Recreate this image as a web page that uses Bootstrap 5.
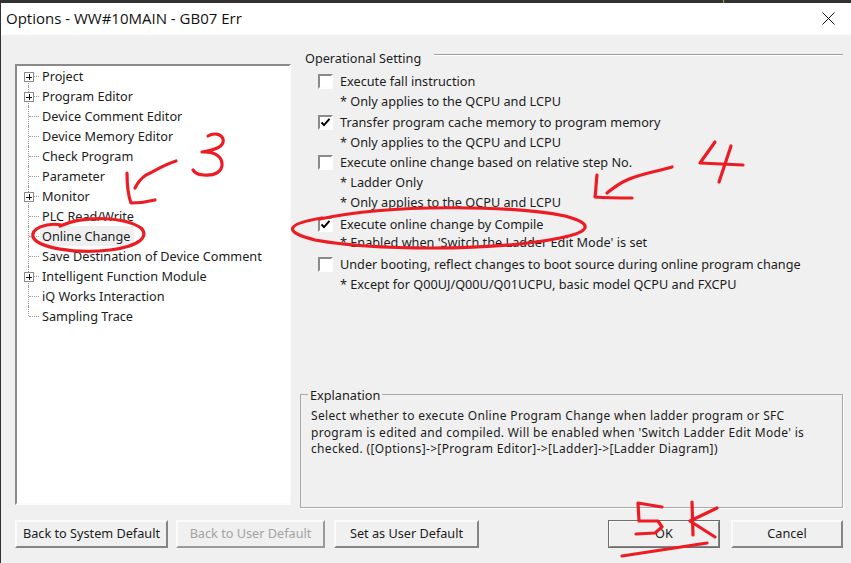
<!DOCTYPE html>
<html lang="en">
<head>
<meta charset="utf-8">
<title>Options</title>
<link rel="stylesheet" href="https://cdn.jsdelivr.net/npm/bootstrap@5.3.0/dist/css/bootstrap.min.css">
<style>
html,body{height:563px;overflow:hidden}
body{background:#f0f0f0;font-family:"Noto Sans","Liberation Sans",sans-serif;font-size:12.7px;line-height:20px;color:#1c1c1c}
.dlg{position:relative;width:851px;height:563px;border-left:1px solid #333}
.topstrip{height:3px;background:#333;margin-left:-1px}
.topnote{position:absolute;left:722px;top:0;height:3px;width:129px;overflow:hidden;border-left:1px solid #b5a52a}
.titlebar{height:32px;background:#fff;padding:0 5px 2px;font-family:"Open Sans","Noto Sans",sans-serif;font-size:15px;color:#111}
.closex{margin-right:11px}
.content{padding:16px 8px 0 14px;gap:9px;height:473px}
.treebox{width:276px;height:441px;margin-top:13px;background:#fff;border:2px solid;border-color:#8a8a8a #fbfbfb #fbfbfb #8a8a8a;padding:0}
.treerow{position:relative;height:20px;padding-left:24px;white-space:nowrap}
.treerow::before{content:"";position:absolute;left:11px;top:0;bottom:0;border-left:1px dotted #999}
.treerow:first-child::before{top:9px}
.treerow:last-child::before{bottom:10px}
.treerow::after{content:"";position:absolute;left:12px;top:10px;width:10px;border-top:1px dotted #999}
.treelabel{display:inline-block;padding:0 1px;height:20px}
.treelabel.sel{background:#efefef;width:94px;margin-left:-1px;padding-left:2px}
.plus{position:absolute;left:7px;top:6px;width:10px;height:10px;background:#fff;border:1px solid #8b8b8b;z-index:1}
.plus::before{content:"";position:absolute;left:1px;right:1px;top:3.5px;border-top:1px solid #111}
.plus::after{content:"";position:absolute;top:1px;bottom:1px;left:3.5px;border-left:1px solid #111}
.rightcol{width:543px;height:457px}
.grouphead{height:14px;padding-left:5px;gap:6px;justify-content:space-between}
.grouphead .ruleline{flex:0 0 409px;border-top:1px solid #a0a0a0;border-bottom:1px solid #fff;height:2px;margin-bottom:6px}
.opts{padding-left:18px;margin-top:6px}
.optrow{height:20px;gap:7px;white-space:nowrap}
.optnote{height:20px;padding-left:22px;white-space:nowrap}
.opts .form-check-input{appearance:none;flex:0 0 15px;width:15px;height:15px;margin:0;border-radius:0;background-color:#fff;border:2px solid;border-color:#8a8a8a #fdfdfd #fdfdfd #8a8a8a;box-shadow:none}
.opts .form-check-input:checked{background-color:#fff;border-color:#8a8a8a #fdfdfd #fdfdfd #8a8a8a;background-image:url("data:image/svg+xml,%3Csvg xmlns='http://www.w3.org/2000/svg' viewBox='0 0 11 11'%3E%3Cpath d='M1.5 5.5l2.5 2.6 5.5-6.2' fill='none' stroke='%23000' stroke-width='2'/%3E%3C/svg%3E");background-size:11px 11px}
.mt-t{margin-top:1px}
.mt-2t{margin-top:2px}
.mt-n2t{margin-top:-2px}
.explain{position:relative;margin-top:auto;height:114px;border:1px solid #a9a9a9;padding:13px 10px 0 10px;font-size:12px;letter-spacing:.33px;line-height:16.5px;box-shadow:1px 1px 0 #fff;white-space:nowrap}
.explain .legend{position:absolute;left:7px;top:-7px;background:#f0f0f0;padding:0 2px;line-height:14px;font-size:12.7px;letter-spacing:0}
.bottombar{padding:12px 8px 0 14px}
.winbtn{font-size:12.7px;line-height:16px;height:28px;padding:0 0 2px;border-radius:0;color:#1c1c1c;background:#f0f0f0;border:2px solid;border-color:#fbfbfb #858585 #858585 #fbfbfb}
.winbtn:disabled{color:#a3a3a3;background:#f0f0f0;opacity:1;border-color:#fbfbfb #9a9a9a #9a9a9a #fbfbfb}
.winbtn.defbtn{outline:1px solid #6d6d6d;outline-offset:-1px}
.w153{width:153px}.w149{width:149px}.w146{width:145px}.w112{width:112px}
.btngroup-l{gap:8px}.btngroup-l .w146{margin-left:1px}.gap11{gap:11px}
.ink{position:absolute;left:-1px;top:0;width:851px;height:563px;pointer-events:none}
.ink path{fill:none;stroke:#ed1c24;stroke-width:3.2;stroke-linecap:round;stroke-linejoin:round}
</style>
</head>
<body>
<div class="dlg">
  <div class="topstrip"></div>
  <div class="topnote"></div>
  <div class="titlebar d-flex align-items-center justify-content-between">
    <span>Options - WW#10MAIN - GB07 Err</span>
    <svg class="closex" width="13" height="13" viewBox="0 0 13 13"><path d="M.5.5l12 12M12.5.5l-12 12" stroke="#111" stroke-width="1" fill="none"/></svg>
  </div>
  <div class="content d-flex">
    <div class="treebox flex-shrink-0">
      <div class="treerow"><span class="plus"></span><span class="treelabel">Project</span></div>
      <div class="treerow"><span class="plus"></span><span class="treelabel">Program Editor</span></div>
      <div class="treerow"><span class="treelabel">Device Comment Editor</span></div>
      <div class="treerow"><span class="treelabel">Device Memory Editor</span></div>
      <div class="treerow"><span class="treelabel">Check Program</span></div>
      <div class="treerow"><span class="treelabel">Parameter</span></div>
      <div class="treerow"><span class="plus"></span><span class="treelabel">Monitor</span></div>
      <div class="treerow"><span class="treelabel">PLC Read/Write</span></div>
      <div class="treerow"><span class="treelabel sel">Online Change</span></div>
      <div class="treerow"><span class="treelabel">Save Destination of Device Comment</span></div>
      <div class="treerow"><span class="plus"></span><span class="treelabel">Intelligent Function Module</span></div>
      <div class="treerow"><span class="treelabel">iQ Works Interaction</span></div>
      <div class="treerow"><span class="treelabel">Sampling Trace</span></div>
    </div>
    <div class="rightcol d-flex flex-column">
      <div class="grouphead d-flex align-items-center"><span>Operational Setting</span><span class="ruleline"></span></div>
      <div class="opts">
        <div class="optrow d-flex align-items-center"><input class="form-check-input" type="checkbox" aria-label="Execute fall instruction"><span>Execute fall instruction</span></div>
        <div class="optnote">* Only applies to the QCPU and LCPU</div>
        <div class="optrow d-flex align-items-center mt-t"><input class="form-check-input" type="checkbox" checked aria-label="Transfer program cache memory to program memory"><span>Transfer program cache memory to program memory</span></div>
        <div class="optnote">* Only applies to the QCPU and LCPU</div>
        <div class="optrow d-flex align-items-center"><input class="form-check-input" type="checkbox" aria-label="Execute online change based on relative step No."><span>Execute online change based on relative step No.</span></div>
        <div class="optnote">* Ladder Only</div>
        <div class="optnote">* Only applies to the QCPU and LCPU</div>
        <div class="optrow d-flex align-items-center mt-2t"><input class="form-check-input" type="checkbox" checked aria-label="Execute online change by Compile"><span>Execute online change by Compile</span></div>
        <div class="optnote mt-n2t">* Enabled when 'Switch the Ladder Edit Mode' is set</div>
        <div class="optrow d-flex align-items-center mt-2t"><input class="form-check-input" type="checkbox" aria-label="Under booting, reflect changes to boot source during online program change"><span>Under booting, reflect changes to boot source during online program change</span></div>
        <div class="optnote">* Except for Q00UJ/Q00U/Q01UCPU, basic model QCPU and FXCPU</div>
      </div>
      <div class="explain">
        <span class="legend">Explanation</span>
        Select whether to execute Online Program Change when ladder program or SFC<br>program is edited and compiled. Will be enabled when 'Switch Ladder Edit Mode' is<br>checked. ([Options]-&gt;[Program Editor]-&gt;[Ladder]-&gt;[Ladder Diagram])
      </div>
    </div>
  </div>
  <div class="bottombar d-flex justify-content-between">
    <div class="d-flex btngroup-l">
      <button type="button" class="btn winbtn w153">Back to System Default</button>
      <button type="button" class="btn winbtn w149" disabled>Back to User Default</button>
      <button type="button" class="btn winbtn w146">Set as User Default</button>
    </div>
    <div class="d-flex gap11">
      <button type="button" class="btn winbtn defbtn w112">OK</button>
      <button type="button" class="btn winbtn w112">Cancel</button>
    </div>
  </div>
  <svg class="ink" viewBox="0 0 851 563" aria-hidden="true">
    <path d="M208 136C213 133 221 133 223 139C225 146 216 150 202 152C212 151 221 155 222 163C223 172 214 176 204 175C199 175 195 173 193 170"/>
    <path d="M176 161C163 165 153 172 146 175C140 179 137 184 135 188"/>
    <path d="M127 173C127 183 128 195 131 203C139 203 147 202 155 200"/>
    <path d="M60 226C85 215 125 217 141 228C149 236 141 246 110 250C75 254 38 248 33 237C31 229 45 222 62 225"/>
    <path d="M672 167C655 172 640 174 627 180C618 184 612 189 607 193"/>
    <path d="M597 175C596 183 596 190 595 197C608 198 620 198 632 198"/>
    <path d="M715 142L700 163L743 165"/>
    <path d="M731 146L719 182"/>
    <path d="M320 219C390 204 510 205 565 216C595 224 590 232 560 238C490 252 370 250 315 240C283 232 285 224 322 218"/>
    <path d="M662 507L638 503L639 521L658 521L662 527L655 533L636 534"/>
    <path d="M692 502L693 535"/>
    <path d="M717 508L690 521L715 537"/>
    <path d="M622 556L707 543"/>
  </svg>
</div>
</body>
</html>
